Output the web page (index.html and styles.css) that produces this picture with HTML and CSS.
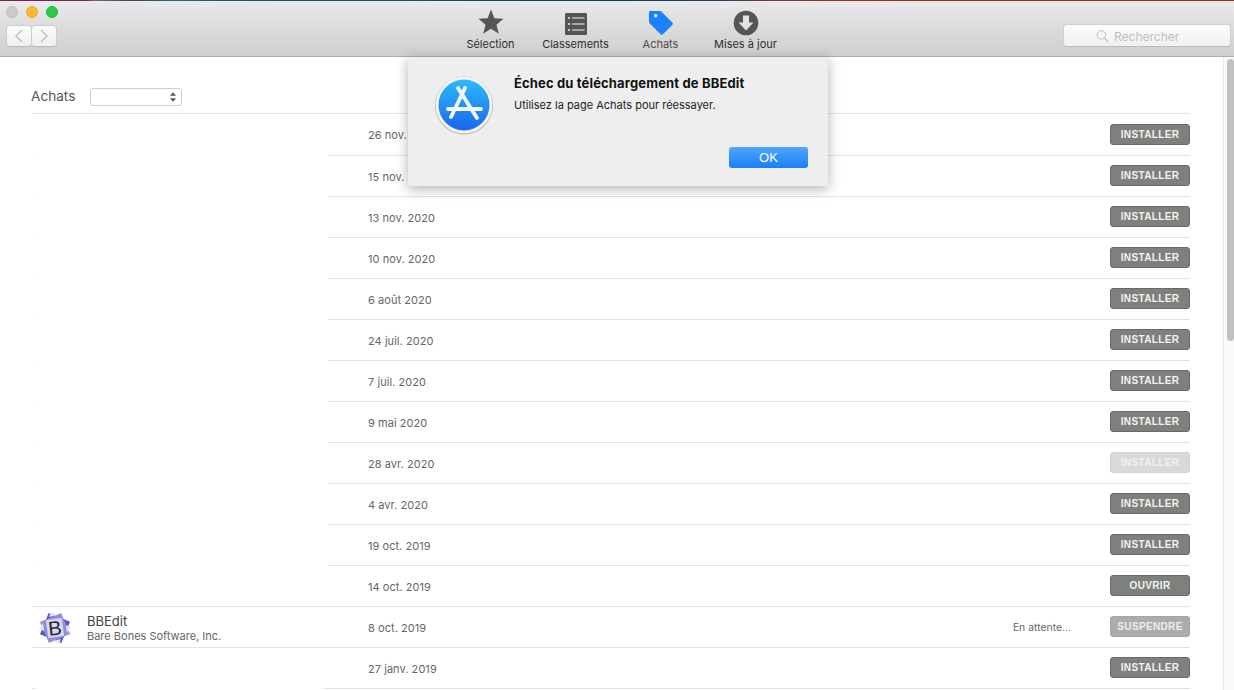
FILE: index.html
```html
<!DOCTYPE html>
<html lang="fr">
<head>
<meta charset="utf-8">
<title>App Store</title>
<link rel="stylesheet" href="styles.css">
</head>
<body>
<div class="window">
  <div class="strip"></div>
  <header class="toolbar">
    <div class="controls">
      <div class="lights"><span class="light gray"></span><span class="light yellow"></span><span class="light green"></span></div>
      <div class="nav-buttons">
        <span class="nav-btn"><svg width="12" height="14" viewBox="0 0 12 14"><path d="M9 1 3 7l6 6" fill="none" stroke="#bdbdbd" stroke-width="1.4"/></svg></span>
        <span class="nav-btn"><svg width="12" height="14" viewBox="0 0 12 14"><path d="m3 1 6 6-6 6" fill="none" stroke="#bdbdbd" stroke-width="1.4"/></svg></span>
      </div>
    </div>
    <nav class="tabs">
      <div class="tab">
        <svg class="tab-icon" width="28" height="28" viewBox="0 0 28 28"><path fill="#555" d="M14 1.500l3.400 8.700 9.100.6-7 5.900 2.300 9.100-7.800-5-7.800 5 2.300-9.100-7-5.900 9.100-.6z"/></svg>
        <span>Sélection</span>
      </div>
      <div class="tab">
        <svg class="tab-icon" width="28" height="28" viewBox="0 -2 28 28"><rect x="3" y="3" width="22" height="22" rx="1" fill="#555"/><g fill="#ddd"><circle cx="7" cy="8" r="1.100"/><circle cx="7" cy="14" r="1.100"/><circle cx="7" cy="20" r="1.100"/><rect x="10" y="7.400" width="12.500" height="1.200"/><rect x="10" y="13.400" width="12.500" height="1.200"/><rect x="10" y="19.400" width="12.500" height="1.200"/></g></svg>
        <span>Classements</span>
      </div>
      <div class="tab active">
        <svg class="tab-icon" width="28" height="28" viewBox="1 -1 28 28"><path fill="#1a82fb" fill-rule="evenodd" d="M3 3.500C3 2.700 3.700 2 4.500 2H13.500C14.300 2 15 2.300 15.500 2.800L26.300 13.600C27 14.300 27 15.200 26.300 15.900L16.900 25.300C16.200 26 15.300 26 14.600 25.300L3.800 14.500C3.300 14 3 13.300 3 12.500ZM9.700 4.800a1.800 1.800 0 1 0 .01 0Z"/></svg>
        <span>Achats</span>
      </div>
      <div class="tab">
        <svg class="tab-icon" width="28" height="28" viewBox="0 -1 28 28"><circle cx="14" cy="14" r="12.300" fill="#555"/><path fill="#e2e2e2" d="M11 6.500h6v7h4.500L14 21.500l-7.500-8H11z"/></svg>
        <span>Mises à jour</span>
      </div>
    </nav>
    <div class="search">
      <svg width="13" height="14" viewBox="0 0 14 14"><circle cx="5.800" cy="5.800" r="4.600" fill="none" stroke="#bbb" stroke-width="1"/><path d="m9.200 9.200 4 4" stroke="#bbb" stroke-width="1.200"/></svg>
      <span>Rechercher</span>
    </div>
  </header>
  <div class="body">
    <main class="content">
      <div class="page-head">
        <h1>Achats</h1>
        <div class="select"><svg width="6" height="10" viewBox="0 0 7 11"><path fill="#555" d="M3.500 0 7 4H0zM3.500 11 0 7h7z"/></svg></div>
      </div>
      <div class="row first"><div class="app"></div><div class="info"><span class="date">26 nov. 2020</span><button class="btn">INSTALLER</button></div></div>
      <div class="row"><div class="app"></div><div class="info"><span class="date">15 nov. 2020</span><button class="btn">INSTALLER</button></div></div>
      <div class="row"><div class="app"></div><div class="info"><span class="date">13 nov. 2020</span><button class="btn">INSTALLER</button></div></div>
      <div class="row"><div class="app"></div><div class="info"><span class="date">10 nov. 2020</span><button class="btn">INSTALLER</button></div></div>
      <div class="row"><div class="app"></div><div class="info"><span class="date">6 août 2020</span><button class="btn">INSTALLER</button></div></div>
      <div class="row"><div class="app"></div><div class="info"><span class="date">24 juil. 2020</span><button class="btn">INSTALLER</button></div></div>
      <div class="row"><div class="app"></div><div class="info"><span class="date">7 juil. 2020</span><button class="btn">INSTALLER</button></div></div>
      <div class="row"><div class="app"></div><div class="info"><span class="date">9 mai 2020</span><button class="btn">INSTALLER</button></div></div>
      <div class="row"><div class="app"></div><div class="info"><span class="date">28 avr. 2020</span><button class="btn disabled">INSTALLER</button></div></div>
      <div class="row"><div class="app"></div><div class="info"><span class="date">4 avr. 2020</span><button class="btn">INSTALLER</button></div></div>
      <div class="row"><div class="app"></div><div class="info"><span class="date">19 oct. 2019</span><button class="btn">INSTALLER</button></div></div>
      <div class="row"><div class="app full"></div><div class="info"><span class="date">14 oct. 2019</span><button class="btn">OUVRIR</button></div></div>
      <div class="row">
        <div class="app full named">
          <svg class="bb-icon" width="34" height="34" viewBox="-17 -17 34 34">
            <rect x="-11.500" y="-11.500" width="23" height="23" fill="#5557bd" transform="rotate(22)"/>
            <rect x="-11.500" y="-11.500" width="23" height="23" fill="#8f90d8" transform="rotate(67)"/>
            <path fill="#e4e4f6" d="M-4-16 2-13-6-11zM16-1 12 5 11-3zM4 16-2 13 6 11zM-16 1-12-5-11 3z"/>
            <rect x="-8" y="-9" width="16" height="18" rx="1" fill="#d6d7f2" transform="rotate(-8)"/>
            <text class="bb-letter" x="0" y="7" text-anchor="middle" transform="rotate(-6)">B</text>
          </svg>
          <div class="app-text"><span class="app-name">BBEdit</span><span class="app-dev">Bare Bones Software, Inc.</span></div>
        </div>
        <div class="info"><span class="date">8 oct. 2019</span><span class="status">En attente...</span><button class="btn muted">SUSPENDRE</button></div>
      </div>
      <div class="row last"><div class="app"></div><div class="info"><span class="date">27 janv. 2019</span><button class="btn">INSTALLER</button></div></div>
    </main>
    <aside class="scrollbar"><div class="thumb"></div></aside>
  </div>
  <section class="dialog">
    <svg class="dialog-icon" width="60" height="60" viewBox="-30 -30 60 60">
      <defs><linearGradient id="blue" x1="0" y1="0" x2="0" y2="1"><stop offset="0" stop-color="#2cbcfb"/><stop offset="1" stop-color="#1a66ee"/></linearGradient></defs>
      <circle r="29" cy=".5" fill="#bdbdbd"/>
      <circle r="28.300" fill="#f4f4f4"/>
      <circle r="25.500" fill="url(#blue)"/>
      <g stroke="#f4f8fd" stroke-width="3.800" stroke-linecap="round"><path d="M1-17-13 12M-6-17 13 13M-16 4H17"/></g>
    </svg>
    <div class="dialog-text">
      <h2>Échec du téléchargement de BBEdit</h2>
      <p>Utilisez la page Achats pour réessayer.</p>
      <div class="dialog-actions"><button class="ok">OK</button></div>
    </div>
  </section>
</div>
</body>
</html>
```
FILE: styles.css
```css
* { box-sizing: border-box; }
html, body { margin: 0; padding: 0; height: 100%; overflow: hidden; background: #fff; }
body { font-family: "Inter", "Liberation Sans", sans-serif; }
.window { position: relative; width: 1234px; height: 690px; display: flex; flex-direction: column; overflow: hidden; }
.strip { height: 1px; flex: none; background: linear-gradient(90deg, #7a1f4e 0, #7a1f4e 85px, #6b6a72 95px, #3a4a55 130px, #2f6470 170px, #0e5a66 260px, #14505f 420px, #123a55 620px, #23405c 720px, #7a3a45 770px, #a0301c 850px, #b32806 1000px, #b32806 1234px); }
.toolbar { flex: none; height: 56px; display: flex; background: linear-gradient(#e9e8ea, #cfcfcf); border-bottom: 1px solid #aeaeae; }
.controls { width: 448px; flex: none; padding: 5px 0 0 6px; display: flex; flex-direction: column; gap: 7px; }
.lights { display: flex; gap: 8px; }
.light { width: 12px; height: 12px; border-radius: 50%; }
.gray { background: #cbcbcb; border: 1px solid #bcbcbc; }
.yellow { background: #fdb831; border: 1px solid #e6a52c; }
.green { background: #2aca44; border: 1px solid #24b43a; }
.nav-buttons { display: flex; }
.nav-btn { width: 26px; height: 22px; display: flex; align-items: center; justify-content: center; background: linear-gradient(#fbfbfb, #f0f0f0); border: 1px solid #cdcdcd; border-bottom-color: #b9b9b9; border-radius: 4px; }
.nav-btn + .nav-btn { margin-left: -1px; }
.nav-btn svg { display: block; }
.tabs { display: flex; width: 340px; flex: none; }
.tab { width: 85px; flex: none; display: flex; flex-direction: column; align-items: center; font-size: 11px; line-height: 14px; color: #2e2e2e; padding-top: 7px; }
.tab-icon { display: block; }
.tab span { margin-top: 1px; }
.tab.active { color: #4d4d4d; }
.search { margin: 23px 3px 0 auto; width: 168px; height: 23px; display: flex; align-items: center; padding: 1px 0 0 32px; gap: 5px; background: linear-gradient(#fbfbfb, #f1f1f1); border: 1px solid #cfcfcf; border-bottom-color: #bbb; border-radius: 4px; font-size: 12px; color: #bdbdbd; }
.body { flex: 1; min-height: 0; display: flex; }
.content { flex: 1; padding: 0 33px 0 32px; overflow: hidden; }
.page-head { height: 57px; display: flex; align-items: flex-start; padding-top: 31px; border-bottom: 1px solid #e3e3e3; }
.page-head h1 { margin: 0 0 0 -1px; width: 59px; font-size: 13.600px; font-weight: 400; line-height: 17px; color: #555; }
.select { width: 92px; height: 18px; border: 1px solid #cfcfcf; border-radius: 3px; display: flex; align-items: center; justify-content: flex-end; padding-right: 5px; background: #fff; }
.row { display: flex; height: 41px; }
.row.first { height: 42px; }
.app { width: 296px; flex: none; background: linear-gradient(#e3e3e3, #e3e3e3) left bottom / 1px 1px no-repeat; }
.app.full { background-size: 100% 1px; }
.app.named { display: flex; align-items: center; gap: 15px; padding-left: 6px; }
.bb-icon { display: block; flex: none; }
.bb-letter { font-family: "Liberation Sans", sans-serif; font-size: 20px; font-weight: 400; fill: #222; }
.app-text { display: flex; flex-direction: column; padding-top: 2px; }
.app-name { font-size: 13px; line-height: 15px; color: #444; }
.app-dev { font-size: 11px; line-height: 14px; color: #666; }
.info { flex: 1; display: flex; align-items: flex-start; padding-left: 40px; border-bottom: 1px solid #e3e3e3; }
.date { font-size: 11px; line-height: 14px; letter-spacing: .05px; color: #666; margin-top: 14px; }
.status { margin: 14px 39px 0 auto; font-size: 10.400px; line-height: 14px; color: #666; }
.btn { margin: 9px 0 0 auto; width: 80px; height: 21px; padding: 0; font-family: "Liberation Sans", sans-serif; font-size: 10px; font-weight: 700; letter-spacing: .35px; color: #f2f2f2; background: #7e807d; border: 1px solid #686a68; border-radius: 3px; }
.first .btn { margin-top: 10px; }
.status + .btn { margin-left: 0; }
.btn.disabled { background: #d9d9d9; border-color: #d2d2d2; color: #f1f1f1; }
.btn.muted { background: #acacac; border-color: #a4a4a4; color: #eee; }
.last .app { width: 291px; background-size: 3px 1px; }
.last .info { padding-left: 45px; }
.scrollbar { width: 11px; flex: none; background: #fafafa; border-left: 1px solid #e9e9e9; padding: 2px 0 0 3px; }
.thumb { width: 7px; height: 282px; border-radius: 4px; background: #c2c2c2; }
.dialog { position: absolute; left: 408px; top: 57px; width: 420px; height: 129px; display: flex; background: #eee; box-shadow: 0 3px 12px rgba(0, 0, 0, .3); padding: 18px 0 0 26px; }
.dialog-icon { display: block; flex: none; }
.dialog-text { padding: 0 0 0 20px; flex: 1; }
.dialog-text h2 { margin: 0; font-size: 13px; line-height: 16px; font-weight: 700; letter-spacing: .15px; color: #111; }
.dialog-text p { margin: 7px 0 0; font-size: 11px; line-height: 14px; color: #222; }
.dialog-actions { display: flex; justify-content: flex-end; padding: 35px 20px 0 0; }
.ok { width: 79px; height: 21px; padding: 0; font-family: "Liberation Sans", sans-serif; font-size: 13px; color: #fff; background: linear-gradient(#4fa6fc, #1b7ff6); border: 0; border-radius: 3px; }
```
